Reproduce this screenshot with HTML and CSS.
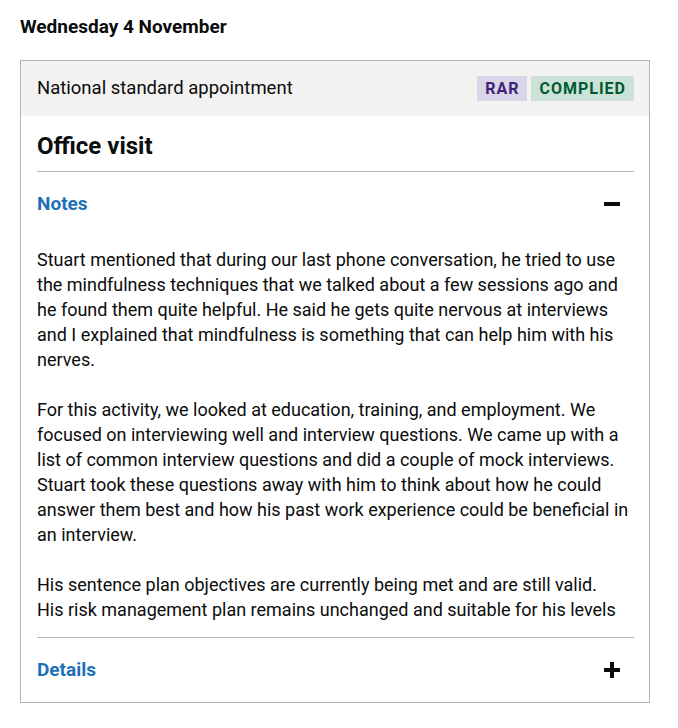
FILE: index.html
```html
<!DOCTYPE html>
<html lang="en">
<head>
<meta charset="utf-8">
<title>Wednesday 4 November</title>
<link rel="stylesheet" href="styles.css">
</head>
<body>
<h2 class="date-heading">Wednesday 4 November</h2>
<div class="card">
  <div class="card-header">
    <span class="card-type">National standard appointment</span>
    <div class="tags">
      <strong class="tag tag-purple">RAR</strong>
      <strong class="tag tag-green">Complied</strong>
    </div>
  </div>
  <div class="card-body">
    <h3 class="card-title">Office visit</h3>
    <div class="section section-open">
      <div class="section-head">
        <a class="section-link" href="#">Notes</a>
        <svg class="section-icon" width="16" height="16" viewBox="0 0 16 16" aria-hidden="true"><rect x="0" y="6" width="16" height="4" fill="#0b0c0c"/></svg>
      </div>
      <div class="section-content">
        <p>Stuart mentioned that during our last phone conversation, he tried to use the mindfulness techniques that we talked about a few sessions ago and he found them quite helpful. He said he gets quite nervous at interviews and I explained that mindfulness is something that can help him with his nerves.</p>
        <p>For this activity, we looked at education, training, and employment. We focused on interviewing well and interview questions. We came up with a list of common interview questions and did a couple of mock interviews. Stuart took these questions away with him to think about how he could answer them best and how his past work experience could be beneficial in an interview.</p>
        <p>His sentence plan objectives are currently being met and are still valid. His&nbsp;risk management plan remains unchanged and suitable for his levels</p>
      </div>
    </div>
    <div class="section">
      <div class="section-head">
        <a class="section-link" href="#">Details</a>
        <svg class="section-icon" width="16" height="16" viewBox="0 0 16 16" aria-hidden="true"><rect x="0" y="6" width="16" height="4" fill="#0b0c0c"/><rect x="6" y="0" width="4" height="16" fill="#0b0c0c"/></svg>
      </div>
    </div>
  </div>
</div>
</body>
</html>
```
FILE: styles.css
```css
* { box-sizing: border-box; }
body {
  margin: 0;
  padding: 14px 20px;
  font-family: Roboto, "Liberation Sans", Arial, sans-serif;
  color: #0b0c0c;
  background: #ffffff;
}
.date-heading {
  margin: 0 0 21px;
  font-size: 19px;
  line-height: 25px;
  font-weight: 700;
}
.card {
  width: 630px;
  border: 1px solid #b1b4b6;
}
.card-header {
  display: flex;
  justify-content: space-between;
  align-items: center;
  padding: 15px 15px 15px 16px;
  background: #f3f2f1;
}
.card-type {
  font-size: 18.5px;
  line-height: 25px;
}
.tags {
  display: flex;
  gap: 4px;
}
.tag {
  display: inline-block;
  padding: 5px 8px 4px;
  font-size: 16px;
  line-height: 16px;
  font-weight: 700;
  letter-spacing: 1px;
  text-transform: uppercase;
}
.tag-purple { background: #dbd5e9; color: #3d2375; }
.tag-green { background: #cce2d8; color: #005a30; }
.card-body {
  padding: 0 15px 0 16px;
}
.card-title {
  margin: 0;
  padding: 15px 0 10px;
  font-size: 24px;
  line-height: 30px;
  font-weight: 700;
  border-bottom: 1px solid #b1b4b6;
}
.section-open {
  border-bottom: 1px solid #b1b4b6;
}
.section-head {
  display: flex;
  justify-content: space-between;
  align-items: center;
  padding: 19px 0 20px;
}
.section-open .section-head {
  padding-bottom: 0;
}
.section-link {
  font-size: 19px;
  line-height: 25px;
  font-weight: 700;
  color: #1d70b8;
  text-decoration: none;
}
.section-icon {
  display: block;
  margin-right: 14px;
}
.section-content {
  margin: 31px 0 15px;
  max-height: 375px;
  overflow: hidden;
}
.section-content p {
  margin: 0 0 25px;
  font-size: 18px;
  line-height: 25px;
}
```
